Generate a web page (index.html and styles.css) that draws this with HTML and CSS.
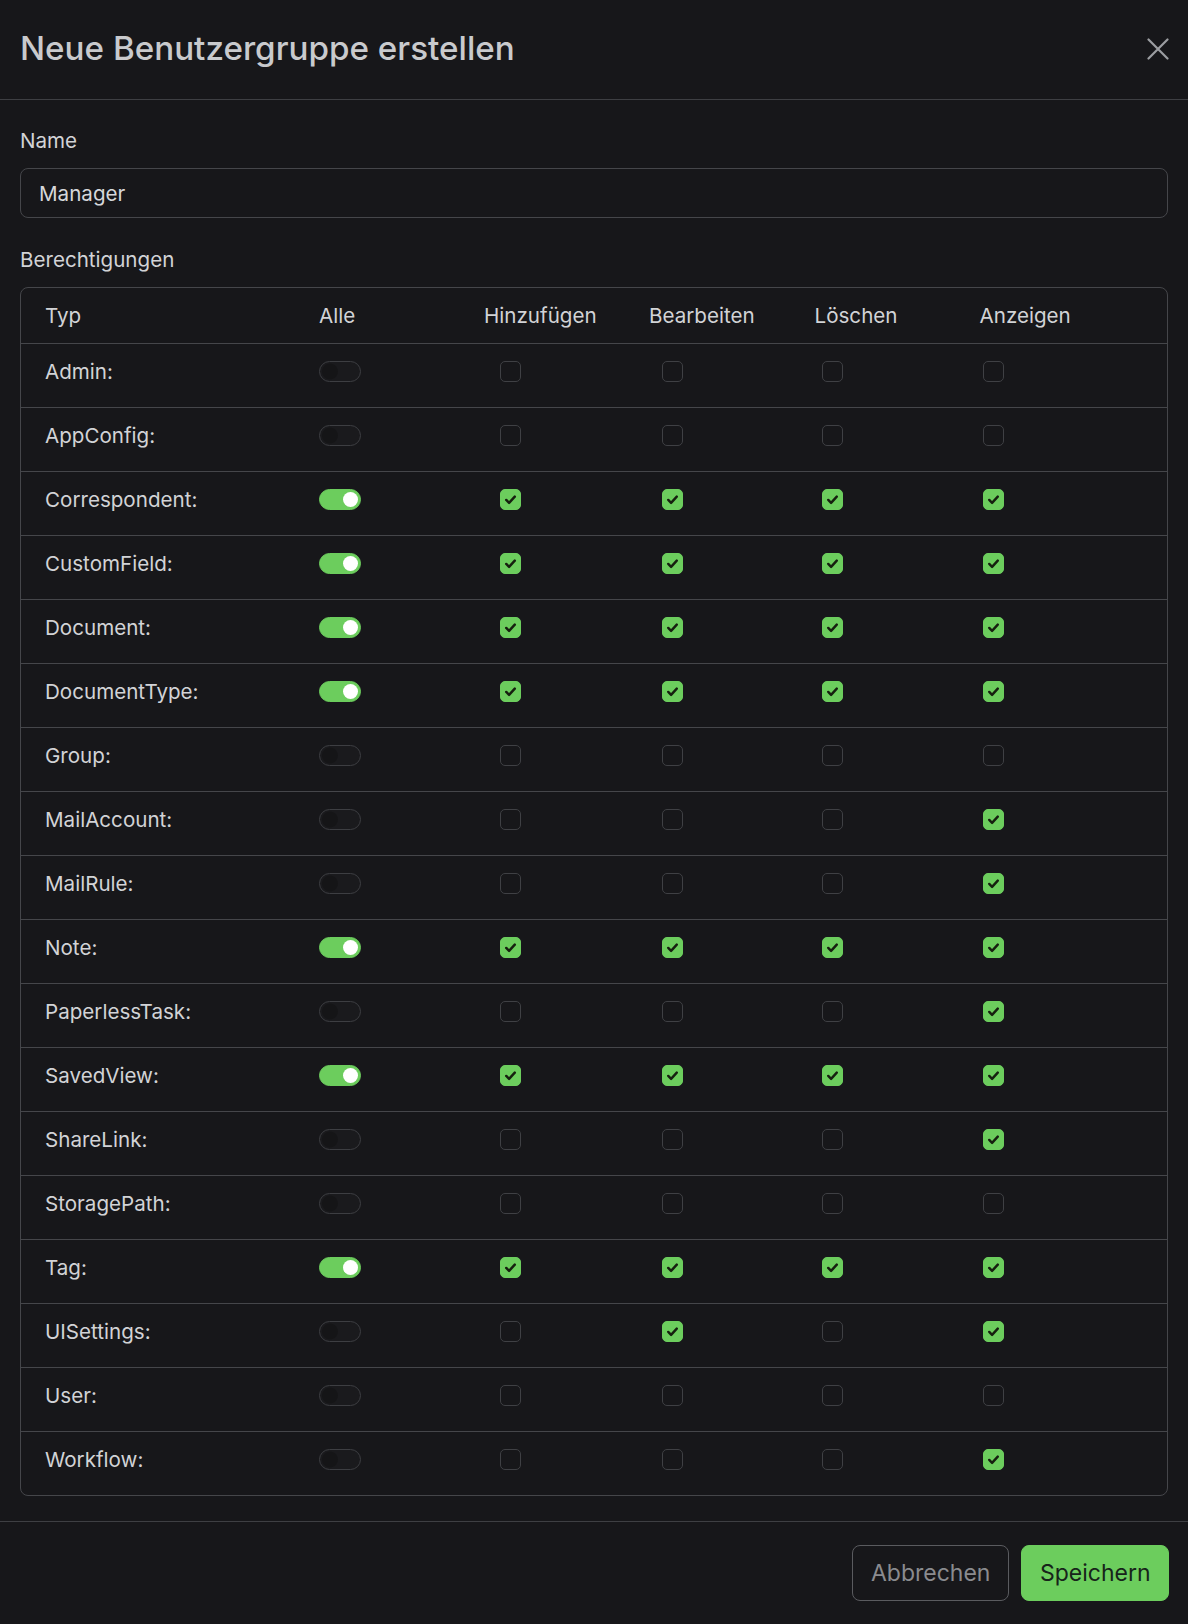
FILE: index.html
```html
<!DOCTYPE html>
<html lang="de">
<head>
<meta charset="utf-8">
<title>Neue Benutzergruppe erstellen</title>
<link rel="stylesheet" href="styles.css">
</head>
<body>
<div class="modal">
  <header class="modal-header">
    <h4 class="modal-title">Neue Benutzergruppe erstellen</h4>
    <button class="btn-close" aria-label="Schließen">
      <svg viewBox="0 0 22 22" width="22" height="22"><path d="M1.5 1.5 L20.5 20.5 M20.5 1.5 L1.5 20.5" stroke="currentColor" stroke-width="2.2" stroke-linecap="round" fill="none"/></svg>
    </button>
  </header>
  <div class="modal-body">
    <label class="form-label">Name</label>
    <div class="form-control">Manager</div>
    <label class="form-label perm-label">Berechtigungen</label>
    <ul class="perm-list">
      <li class="perm-row perm-head">
        <div>Typ</div><div>Alle</div><div>Hinzufügen</div><div>Bearbeiten</div><div>Löschen</div><div>Anzeigen</div>
      </li>
      <li class="perm-row"><div>Admin:</div><span class="sw"></span><span class="cb"></span><span class="cb"></span><span class="cb"></span><span class="cb"></span></li>
      <li class="perm-row"><div>AppConfig:</div><span class="sw"></span><span class="cb"></span><span class="cb"></span><span class="cb"></span><span class="cb"></span></li>
      <li class="perm-row"><div>Correspondent:</div><span class="sw on"></span><span class="cb on"><svg viewBox="0 0 20 20"><path d="M5.5 10.5l3 3 6-6.5"/></svg></span><span class="cb on"><svg viewBox="0 0 20 20"><path d="M5.5 10.5l3 3 6-6.5"/></svg></span><span class="cb on"><svg viewBox="0 0 20 20"><path d="M5.5 10.5l3 3 6-6.5"/></svg></span><span class="cb on"><svg viewBox="0 0 20 20"><path d="M5.5 10.5l3 3 6-6.5"/></svg></span></li>
      <li class="perm-row"><div>CustomField:</div><span class="sw on"></span><span class="cb on"><svg viewBox="0 0 20 20"><path d="M5.5 10.5l3 3 6-6.5"/></svg></span><span class="cb on"><svg viewBox="0 0 20 20"><path d="M5.5 10.5l3 3 6-6.5"/></svg></span><span class="cb on"><svg viewBox="0 0 20 20"><path d="M5.5 10.5l3 3 6-6.5"/></svg></span><span class="cb on"><svg viewBox="0 0 20 20"><path d="M5.5 10.5l3 3 6-6.5"/></svg></span></li>
      <li class="perm-row"><div>Document:</div><span class="sw on"></span><span class="cb on"><svg viewBox="0 0 20 20"><path d="M5.5 10.5l3 3 6-6.5"/></svg></span><span class="cb on"><svg viewBox="0 0 20 20"><path d="M5.5 10.5l3 3 6-6.5"/></svg></span><span class="cb on"><svg viewBox="0 0 20 20"><path d="M5.5 10.5l3 3 6-6.5"/></svg></span><span class="cb on"><svg viewBox="0 0 20 20"><path d="M5.5 10.5l3 3 6-6.5"/></svg></span></li>
      <li class="perm-row"><div>DocumentType:</div><span class="sw on"></span><span class="cb on"><svg viewBox="0 0 20 20"><path d="M5.5 10.5l3 3 6-6.5"/></svg></span><span class="cb on"><svg viewBox="0 0 20 20"><path d="M5.5 10.5l3 3 6-6.5"/></svg></span><span class="cb on"><svg viewBox="0 0 20 20"><path d="M5.5 10.5l3 3 6-6.5"/></svg></span><span class="cb on"><svg viewBox="0 0 20 20"><path d="M5.5 10.5l3 3 6-6.5"/></svg></span></li>
      <li class="perm-row"><div>Group:</div><span class="sw"></span><span class="cb"></span><span class="cb"></span><span class="cb"></span><span class="cb"></span></li>
      <li class="perm-row"><div>MailAccount:</div><span class="sw"></span><span class="cb"></span><span class="cb"></span><span class="cb"></span><span class="cb on"><svg viewBox="0 0 20 20"><path d="M5.5 10.5l3 3 6-6.5"/></svg></span></li>
      <li class="perm-row"><div>MailRule:</div><span class="sw"></span><span class="cb"></span><span class="cb"></span><span class="cb"></span><span class="cb on"><svg viewBox="0 0 20 20"><path d="M5.5 10.5l3 3 6-6.5"/></svg></span></li>
      <li class="perm-row"><div>Note:</div><span class="sw on"></span><span class="cb on"><svg viewBox="0 0 20 20"><path d="M5.5 10.5l3 3 6-6.5"/></svg></span><span class="cb on"><svg viewBox="0 0 20 20"><path d="M5.5 10.5l3 3 6-6.5"/></svg></span><span class="cb on"><svg viewBox="0 0 20 20"><path d="M5.5 10.5l3 3 6-6.5"/></svg></span><span class="cb on"><svg viewBox="0 0 20 20"><path d="M5.5 10.5l3 3 6-6.5"/></svg></span></li>
      <li class="perm-row"><div>PaperlessTask:</div><span class="sw"></span><span class="cb"></span><span class="cb"></span><span class="cb"></span><span class="cb on"><svg viewBox="0 0 20 20"><path d="M5.5 10.5l3 3 6-6.5"/></svg></span></li>
      <li class="perm-row"><div>SavedView:</div><span class="sw on"></span><span class="cb on"><svg viewBox="0 0 20 20"><path d="M5.5 10.5l3 3 6-6.5"/></svg></span><span class="cb on"><svg viewBox="0 0 20 20"><path d="M5.5 10.5l3 3 6-6.5"/></svg></span><span class="cb on"><svg viewBox="0 0 20 20"><path d="M5.5 10.5l3 3 6-6.5"/></svg></span><span class="cb on"><svg viewBox="0 0 20 20"><path d="M5.5 10.5l3 3 6-6.5"/></svg></span></li>
      <li class="perm-row"><div>ShareLink:</div><span class="sw"></span><span class="cb"></span><span class="cb"></span><span class="cb"></span><span class="cb on"><svg viewBox="0 0 20 20"><path d="M5.5 10.5l3 3 6-6.5"/></svg></span></li>
      <li class="perm-row"><div>StoragePath:</div><span class="sw"></span><span class="cb"></span><span class="cb"></span><span class="cb"></span><span class="cb"></span></li>
      <li class="perm-row"><div>Tag:</div><span class="sw on"></span><span class="cb on"><svg viewBox="0 0 20 20"><path d="M5.5 10.5l3 3 6-6.5"/></svg></span><span class="cb on"><svg viewBox="0 0 20 20"><path d="M5.5 10.5l3 3 6-6.5"/></svg></span><span class="cb on"><svg viewBox="0 0 20 20"><path d="M5.5 10.5l3 3 6-6.5"/></svg></span><span class="cb on"><svg viewBox="0 0 20 20"><path d="M5.5 10.5l3 3 6-6.5"/></svg></span></li>
      <li class="perm-row"><div>UISettings:</div><span class="sw"></span><span class="cb"></span><span class="cb on"><svg viewBox="0 0 20 20"><path d="M5.5 10.5l3 3 6-6.5"/></svg></span><span class="cb"></span><span class="cb on"><svg viewBox="0 0 20 20"><path d="M5.5 10.5l3 3 6-6.5"/></svg></span></li>
      <li class="perm-row"><div>User:</div><span class="sw"></span><span class="cb"></span><span class="cb"></span><span class="cb"></span><span class="cb"></span></li>
      <li class="perm-row"><div>Workflow:</div><span class="sw"></span><span class="cb"></span><span class="cb"></span><span class="cb"></span><span class="cb on"><svg viewBox="0 0 20 20"><path d="M5.5 10.5l3 3 6-6.5"/></svg></span></li>
    </ul>
  </div>
  <footer class="modal-footer">
    <button class="btn btn-outline">Abbrechen</button>
    <button class="btn btn-primary">Speichern</button>
  </footer>
</div>
</body>
</html>
```

FILE: styles.css
```css
html, body {
  margin: 0;
  padding: 0;
  background: #17171a;
}
body {
  font-family: Inter, "Noto Sans", "Liberation Sans", sans-serif;
  font-size: 20.6px;
  line-height: 31.2px;
  color: #d2d3d6;
}
.modal {
  width: 1188px;
  min-height: 1624px;
  background: #17171a;
}
.modal-header {
  height: 100px;
  box-sizing: border-box;
  padding: 0 19px 2px 20px;
  display: flex;
  align-items: center;
  justify-content: space-between;
  border-bottom: 1px solid #3e3f43;
}
.modal-title {
  margin: 0;
  font-size: 33.2px;
  font-weight: 500;
  line-height: 41px;
  color: #c9cacd;
  letter-spacing: 0;
}
.btn-close {
  width: 22px;
  height: 22px;
  padding: 0;
  border: 0;
  background: transparent;
  color: #9c9ea2;
  display: flex;
}
.modal-body {
  padding: 24.6px 20px 24.5px 20px;
}
.form-label {
  display: block;
  margin-bottom: 12.5px;
}
.form-control {
  height: 50.2px;
  box-sizing: border-box;
  border: 1px solid #45464a;
  border-radius: 8px;
  padding: 0 18px;
  display: flex;
  align-items: center;
  color: #d6d7da;
  margin-bottom: 25.5px;
}
.perm-label {
  margin-bottom: 12px;
}
.perm-list {
  list-style: none;
  margin: 0;
  padding: 0;
  border: 1px solid #45464a;
  border-radius: 8px;
}
.perm-row {
  display: grid;
  grid-template-columns: 274px 181px 162px 160px 161px 1fr;
  align-items: center;
  padding: 12px 24px 19.8px 24px;
  border-bottom: 1px solid #45464a;
}
.perm-row:last-child {
  border-bottom: 0;
}
.perm-head {
  grid-template-columns: 274px 165px 165px 165.5px 165px 1fr;
  padding-bottom: 12px;
}
.sw {
  width: 42px;
  height: 21px;
  box-sizing: border-box;
  border: 1px solid #3d3e42;
  border-radius: 11px;
  background: radial-gradient(circle at 10px 50%, #151517 0 7.5px, #1a1a1d 8.5px);
  position: relative;
}
.sw.on {
  border-color: #6ccd5d;
  background: #6ccd5d;
}
.sw.on::after {
  content: "";
  position: absolute;
  right: 2px;
  top: 2px;
  width: 15px;
  height: 15px;
  border-radius: 50%;
  background: #ffffff;
}
.cb {
  width: 21px;
  height: 21px;
  box-sizing: border-box;
  border: 1px solid #3f4044;
  border-radius: 5px;
  background: #17171a;
  display: flex;
}
.cb.on {
  border-color: #6ccd5d;
  background: #6ccd5d;
}
.cb svg {
  width: 19px;
  height: 19px;
}
.cb svg path {
  fill: none;
  stroke: #16200f;
  stroke-width: 2.6;
  stroke-linecap: round;
  stroke-linejoin: round;
}
.modal-footer {
  border-top: 1px solid #3e3f43;
  padding: 23.3px 19px 0 20px;
  display: flex;
  justify-content: flex-end;
  gap: 12.5px;
}
.btn {
  height: 56px;
  box-sizing: border-box;
  padding: 0 17.5px;
  border-radius: 8px;
  font-family: Inter, "Noto Sans", "Liberation Sans", sans-serif;
  font-size: 23px;
  font-weight: 400;
}
.btn-outline {
  background: transparent;
  border: 1px solid #5a5b5f;
  color: #8a8b8f;
}
.btn-primary {
  background: #6ccd5d;
  border: 1px solid #6ccd5d;
  color: #17241a;
}
```
